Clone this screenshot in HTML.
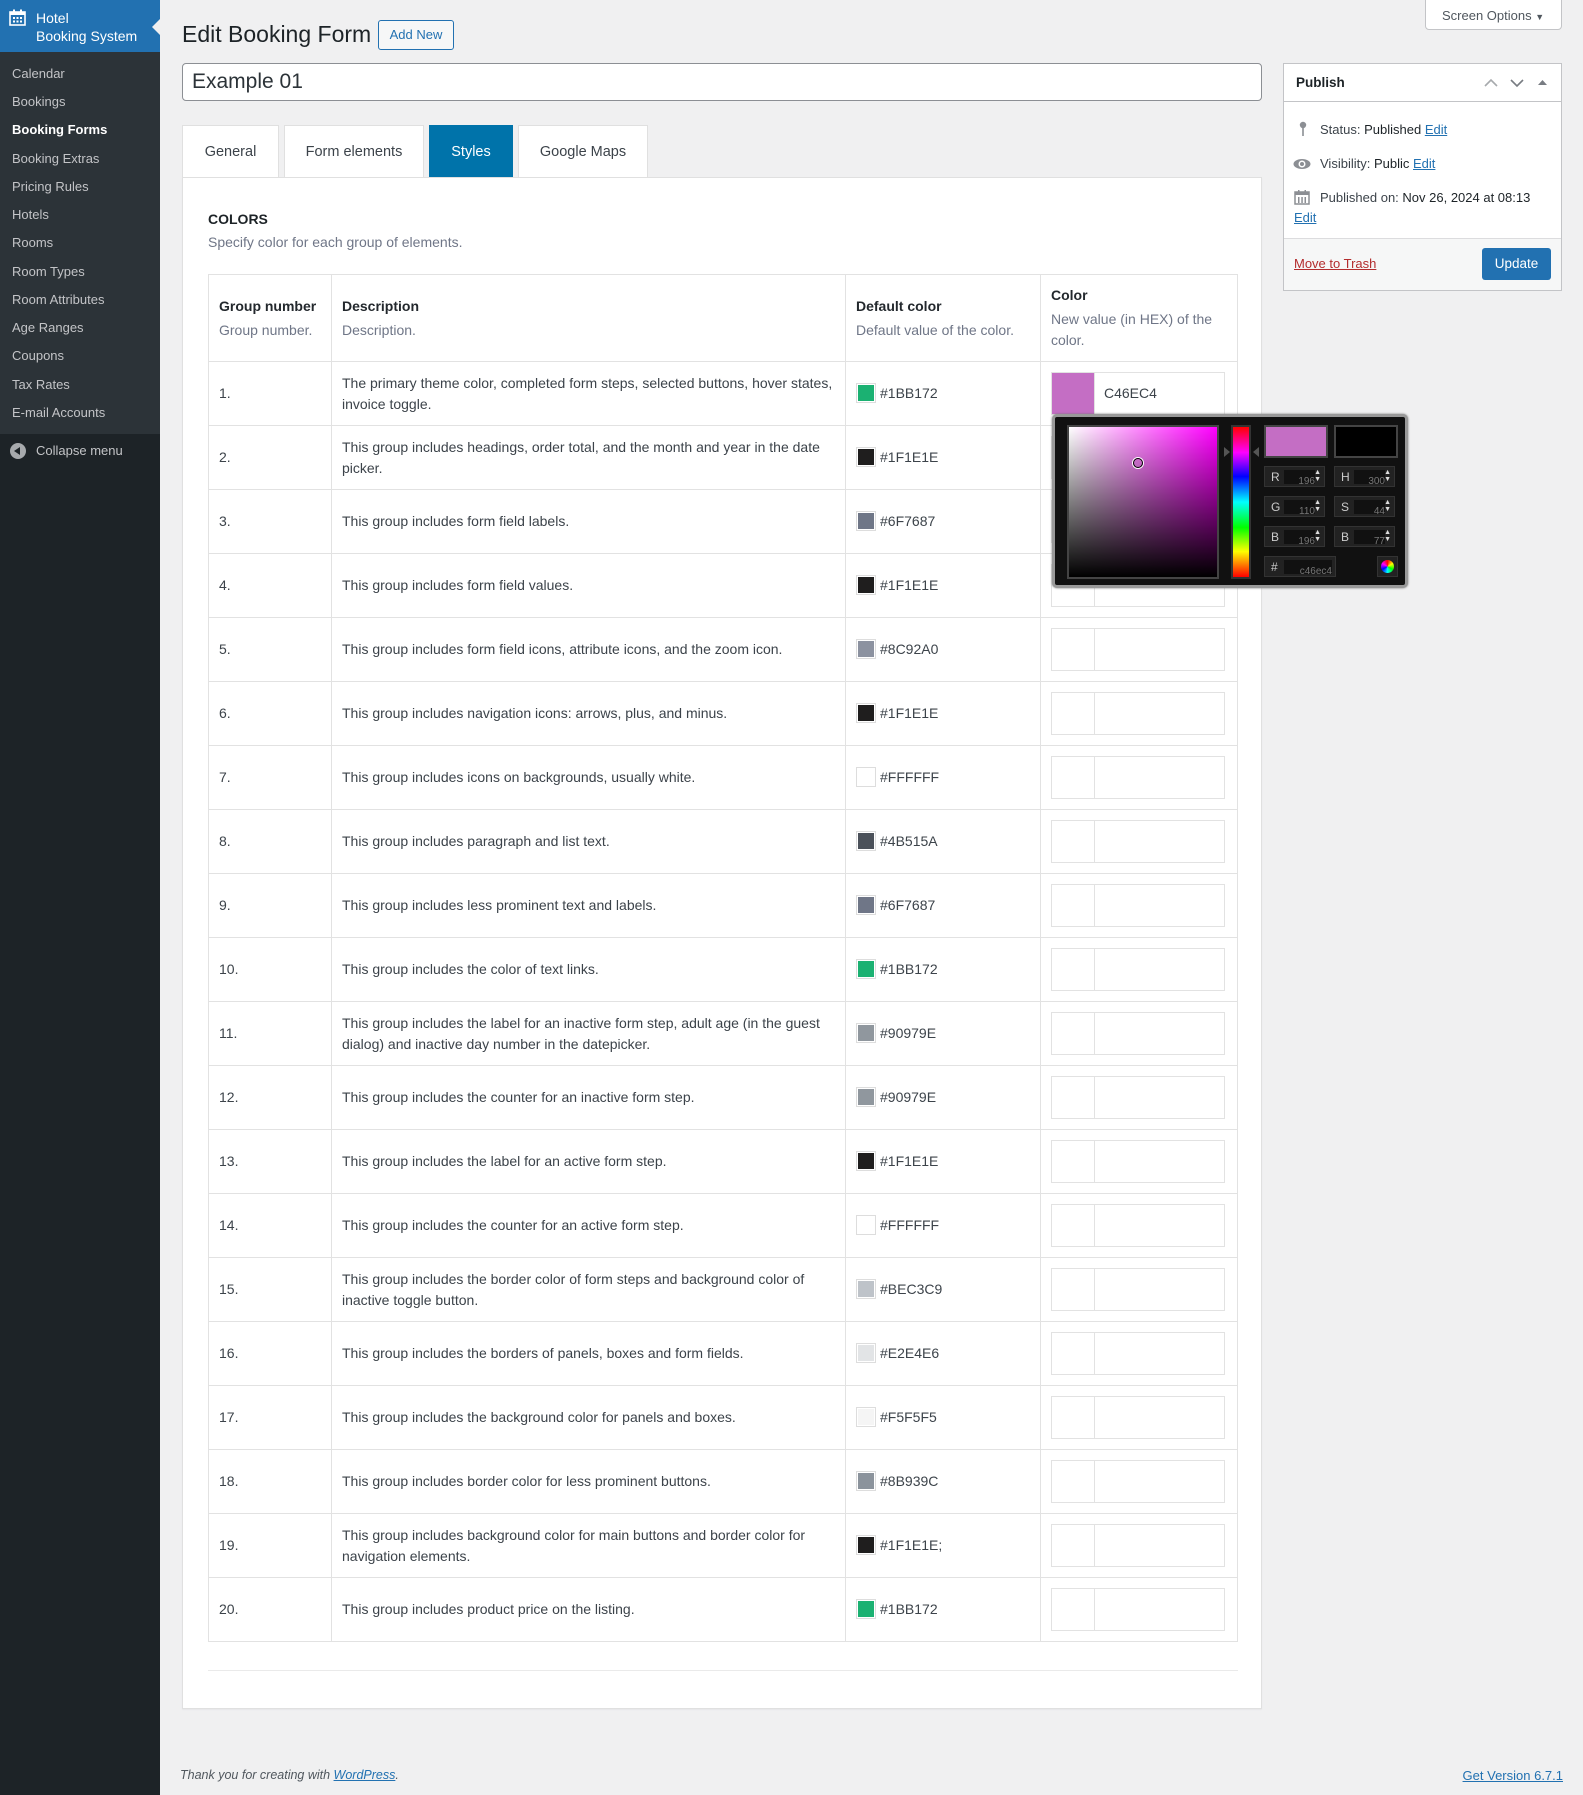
<!DOCTYPE html>
<html><head><meta charset="utf-8"><style>
*{box-sizing:border-box;margin:0;padding:0}
body{width:1583px;height:1795px;background:#f0f0f1;font-family:"Liberation Sans",sans-serif;color:#1d2327;position:relative;overflow:hidden;font-size:13px}
.abs{position:absolute}
#side{left:0;top:0;width:160px;height:1795px;background:#1d2327}
#sh{left:0;top:0;width:160px;height:52px;background:#2271b1;color:#fff;font-size:14px;line-height:18px;padding:9px 0 0 36px}
#sub{left:0;top:52px;width:160px;height:382px;background:#2c3338}
.mi{position:absolute;left:12px;color:#c3c4c7;font-size:13px}
.tri{position:absolute;left:152px;top:19px;width:0;height:0;border-top:8px solid transparent;border-bottom:8px solid transparent;border-right:8px solid #f0f0f1}
h1{position:absolute;left:182px;top:21px;font-size:23px;font-weight:400;color:#1d2327}
.btn{position:absolute;left:378px;top:20px;width:76px;height:30px;border:1px solid #2271b1;border-radius:3px;background:#f6f7f7;color:#2271b1;font-size:13px;text-align:center;line-height:28px}
#title{left:182px;top:63px;width:1080px;height:38px;background:#fff;border:1px solid #8c8f94;border-radius:4px;font-size:21px;padding:6px 9px;color:#2c3338}
.tab{position:absolute;top:125px;height:53px;background:#fff;border:1px solid #e0e0e0;border-bottom:none;font-size:14.5px;color:#3c434a;text-align:center;line-height:52px}
#panel{left:182px;top:177px;width:1080px;height:1532px;background:#fff;border:1px solid #e0e0e0;box-shadow:0 1px 1px rgba(0,0,0,.04)}
table{position:absolute;left:208px;top:274px;width:1030px;border-collapse:collapse;font-size:14px;color:#3c434a}
td,th{font-family:"Liberation Sans",sans-serif;font-size:14px;border:1px solid #e2e2e2;vertical-align:middle;text-align:left;padding:0 10px;line-height:21px}
th{height:87px;font-weight:700;color:#23282d}
th span{display:block;font-weight:400;color:#6f7687;font-size:14px;margin-top:3px}
td{height:64px;color:#3c434a}
.sw{display:inline-block;width:20px;height:20px;border:1px solid #ddd;vertical-align:middle;margin-right:4px;position:relative;top:-1px}
.sw i{position:absolute;left:1px;top:1px;width:16px;height:16px}
.ci{display:block;width:174px;height:43px;border:1px solid #e2e2e2;position:relative}
.ci:before{content:"";position:absolute;left:42px;top:0;bottom:0;border-left:1px solid #e2e2e2}
#pub{left:1283px;top:63px;width:279px;height:228px;background:#fff;border:1px solid #c3c4c7}
.fld{position:absolute;width:61px;height:21px;background:#222;border:1px solid #333;color:#ccc;font-size:12px}
.fld b{position:absolute;left:6px;top:3px;font-weight:400}
.fld i{position:absolute;left:19px;top:3px;width:31px;height:14px;background:#111;font-style:normal;color:#777;font-size:10px;text-align:right;line-height:24px;overflow:visible}
.fld u{position:absolute;right:3px;top:2px;text-decoration:none;color:#ddd;font-size:7px;line-height:7px}
a{color:#2271b1}
</style></head><body>
<div id="side" class="abs"></div>
<div id="sub" class="abs"></div>
<div id="sh" class="abs">Hotel<br>Booking System
<svg style="position:absolute;left:9px;top:9px" width="17" height="17" viewBox="0 0 17 17"><rect x="1" y="3" width="15" height="13" fill="none" stroke="#fff" stroke-width="1.6"/><rect x="1" y="3" width="15" height="3" fill="#fff"/><rect x="4" y="0.5" width="2" height="4" fill="#fff"/><rect x="11" y="0.5" width="2" height="4" fill="#fff"/><g fill="#fff"><rect x="4" y="8" width="2" height="2"/><rect x="7.5" y="8" width="2" height="2"/><rect x="11" y="8" width="2" height="2"/><rect x="4" y="11.5" width="2" height="2"/><rect x="7.5" y="11.5" width="2" height="2"/><rect x="11" y="11.5" width="2" height="2"/></g></svg>
<div class="tri"></div></div>
<div class="mi" style="top:66px">Calendar</div>
<div class="mi" style="top:94px">Bookings</div>
<div class="mi" style="top:122px;color:#fff;font-weight:700">Booking Forms</div>
<div class="mi" style="top:151px">Booking Extras</div>
<div class="mi" style="top:179px">Pricing Rules</div>
<div class="mi" style="top:207px">Hotels</div>
<div class="mi" style="top:235px">Rooms</div>
<div class="mi" style="top:264px">Room Types</div>
<div class="mi" style="top:292px">Room Attributes</div>
<div class="mi" style="top:320px">Age Ranges</div>
<div class="mi" style="top:348px">Coupons</div>
<div class="mi" style="top:377px">Tax Rates</div>
<div class="mi" style="top:405px">E-mail Accounts</div>
<div class="mi" style="top:443px;left:36px">Collapse menu</div>
<div class="abs" style="left:10px;top:443px;width:16px;height:16px;border-radius:50%;background:#a7aaad"><div style="position:absolute;left:4px;top:4px;border-top:4px solid transparent;border-bottom:4px solid transparent;border-right:6px solid #1d2327"></div></div>

<h1>Edit Booking Form</h1>
<div class="btn">Add New</div>
<div class="abs" style="left:1425px;top:-1px;width:137px;height:31px;background:#fff;border:1px solid #c3c4c7;border-radius:0 0 4px 4px;font-size:13px;color:#50575e;padding:8px 0 0 16px">Screen Options <span style="font-size:9px">▼</span></div>
<div id="title" class="abs">Example 01</div>

<div class="tab" style="left:182px;width:97px">General</div>
<div class="tab" style="left:284px;width:140px">Form elements</div>
<div class="tab" style="left:429px;width:84px;background:#0073aa;border-color:#0073aa;color:#fff">Styles</div>
<div class="tab" style="left:518px;width:130px">Google Maps</div>
<div id="panel" class="abs"></div>
<div class="abs" style="left:208px;top:211px;font-weight:700;font-size:14px;color:#1d2327">COLORS</div>
<div class="abs" style="left:208px;top:234px;font-size:14px;color:#6f7687">Specify color for each group of elements.</div>

<table>
<tr><th style="width:123px">Group number<span>Group number.</span></th><th style="width:514px">Description<span>Description.</span></th><th style="width:195px">Default color<span>Default value of the color.</span></th><th style="vertical-align:top;padding-top:10px">Color<span>New value (in HEX) of the color.</span></th></tr>
<tr><td>1.</td><td>The primary theme color, completed form steps, selected buttons, hover states, invoice toggle.</td><td><span class="sw"><i style="background:#1BB172"></i></span>#1BB172</td><td><span class="ci"><span style="position:absolute;left:0;top:0;width:42px;height:41px;background:#C46EC4"></span><span style="position:absolute;left:52px;top:10px;color:#3c434a">C46EC4</span></span></td></tr>
<tr><td>2.</td><td>This group includes headings, order total, and the month and year in the date picker.</td><td><span class="sw"><i style="background:#1F1E1E"></i></span>#1F1E1E</td><td><span class="ci"></span></td></tr>
<tr><td>3.</td><td>This group includes form field labels.</td><td><span class="sw"><i style="background:#6F7687"></i></span>#6F7687</td><td><span class="ci"></span></td></tr>
<tr><td>4.</td><td>This group includes form field values.</td><td><span class="sw"><i style="background:#1F1E1E"></i></span>#1F1E1E</td><td><span class="ci"></span></td></tr>
<tr><td>5.</td><td>This group includes form field icons, attribute icons, and the zoom icon.</td><td><span class="sw"><i style="background:#8C92A0"></i></span>#8C92A0</td><td><span class="ci"></span></td></tr>
<tr><td>6.</td><td>This group includes navigation icons: arrows, plus, and minus.</td><td><span class="sw"><i style="background:#1F1E1E"></i></span>#1F1E1E</td><td><span class="ci"></span></td></tr>
<tr><td>7.</td><td>This group includes icons on backgrounds, usually white.</td><td><span class="sw"><i style="background:#FFFFFF"></i></span>#FFFFFF</td><td><span class="ci"></span></td></tr>
<tr><td>8.</td><td>This group includes paragraph and list text.</td><td><span class="sw"><i style="background:#4B515A"></i></span>#4B515A</td><td><span class="ci"></span></td></tr>
<tr><td>9.</td><td>This group includes less prominent text and labels.</td><td><span class="sw"><i style="background:#6F7687"></i></span>#6F7687</td><td><span class="ci"></span></td></tr>
<tr><td>10.</td><td>This group includes the color of text links.</td><td><span class="sw"><i style="background:#1BB172"></i></span>#1BB172</td><td><span class="ci"></span></td></tr>
<tr><td>11.</td><td>This group includes the label for an inactive form step, adult age (in the guest dialog) and inactive day number in the datepicker.</td><td><span class="sw"><i style="background:#90979E"></i></span>#90979E</td><td><span class="ci"></span></td></tr>
<tr><td>12.</td><td>This group includes the counter for an inactive form step.</td><td><span class="sw"><i style="background:#90979E"></i></span>#90979E</td><td><span class="ci"></span></td></tr>
<tr><td>13.</td><td>This group includes the label for an active form step.</td><td><span class="sw"><i style="background:#1F1E1E"></i></span>#1F1E1E</td><td><span class="ci"></span></td></tr>
<tr><td>14.</td><td>This group includes the counter for an active form step.</td><td><span class="sw"><i style="background:#FFFFFF"></i></span>#FFFFFF</td><td><span class="ci"></span></td></tr>
<tr><td>15.</td><td>This group includes the border color of form steps and background color of inactive toggle button.</td><td><span class="sw"><i style="background:#BEC3C9"></i></span>#BEC3C9</td><td><span class="ci"></span></td></tr>
<tr><td>16.</td><td>This group includes the borders of panels, boxes and form fields.</td><td><span class="sw"><i style="background:#E2E4E6"></i></span>#E2E4E6</td><td><span class="ci"></span></td></tr>
<tr><td>17.</td><td>This group includes the background color for panels and boxes.</td><td><span class="sw"><i style="background:#F5F5F5"></i></span>#F5F5F5</td><td><span class="ci"></span></td></tr>
<tr><td>18.</td><td>This group includes border color for less prominent buttons.</td><td><span class="sw"><i style="background:#8B939C"></i></span>#8B939C</td><td><span class="ci"></span></td></tr>
<tr><td>19.</td><td>This group includes background color for main buttons and border color for navigation elements.</td><td><span class="sw"><i style="background:#1F1E1E"></i></span>#1F1E1E;</td><td><span class="ci"></span></td></tr>
<tr><td>20.</td><td>This group includes product price on the listing.</td><td><span class="sw"><i style="background:#1BB172"></i></span>#1BB172</td><td><span class="ci"></span></td></tr>
</table>
<div class="abs" style="left:208px;top:1670px;width:1030px;border-top:1px solid #eaeaea"></div>

<!-- color picker -->
<div class="abs" style="left:1052px;top:414px;width:356px;height:174px;background:#111;border:3px solid #999;border-radius:5px;box-shadow:0 0 2px #777">
<div class="abs" style="left:12px;top:8px;width:152px;height:154px;border:2px solid #444;background:linear-gradient(to top,#000,rgba(0,0,0,0)),linear-gradient(to right,#fff,#ff00ff)"></div>
<div class="abs" style="left:78px;top:41px;width:10px;height:10px;border:1.5px solid #000;border-radius:50%;box-shadow:0 0 0 1px #fff"></div>
<div class="abs" style="left:176px;top:8px;width:20px;height:154px;border:2px solid #333;background:linear-gradient(to bottom,#f00,#f0f 17%,#00f 33%,#0ff 50%,#0f0 67%,#ff0 83%,#f00)"></div>
<div class="abs" style="left:169px;top:30px;border-top:5px solid transparent;border-bottom:5px solid transparent;border-left:6px solid #555"></div>
<div class="abs" style="left:198px;top:30px;border-top:5px solid transparent;border-bottom:5px solid transparent;border-right:6px solid #555"></div>
<div class="abs" style="left:209px;top:8px;width:64px;height:33px;background:#C46EC4;border:2px solid #444"></div>
<div class="abs" style="left:279px;top:8px;width:64px;height:33px;background:#000;border:2px solid #444"></div>
<div class="fld" style="left:209px;top:49px"><b>R</b><i>196</i><u>▲<br>▼</u></div>
<div class="fld" style="left:279px;top:49px"><b>H</b><i>300</i><u>▲<br>▼</u></div>
<div class="fld" style="left:209px;top:79px"><b>G</b><i>110</i><u>▲<br>▼</u></div>
<div class="fld" style="left:279px;top:79px"><b>S</b><i>44</i><u>▲<br>▼</u></div>
<div class="fld" style="left:209px;top:109px"><b>B</b><i>196</i><u>▲<br>▼</u></div>
<div class="fld" style="left:279px;top:109px"><b>B</b><i>77</i><u>▲<br>▼</u></div>
<div class="fld" style="left:209px;top:139px;width:72px"><b>#</b><i style="width:48px">c46ec4</i></div>
<div class="abs" style="left:322px;top:139px;width:21px;height:21px;background:#222;border:1px solid #333"><div style="position:absolute;left:3px;top:3px;width:13px;height:13px;border-radius:50%;background:conic-gradient(#f00,#ff0,#0f0,#0ff,#00f,#f0f,#f00)"></div></div>
</div>

<!-- publish -->
<div id="pub" class="abs">
<div style="height:38px;border-bottom:1px solid #c3c4c7;padding:11px 12px;font-weight:700;font-size:13.5px;position:relative">Publish
<svg style="position:absolute;right:12px;top:13px" width="65" height="12" viewBox="0 0 65 12"><path d="M1 9 L7 3 L13 9" fill="none" stroke="#a7aaad" stroke-width="1.6"/><path d="M27 3 L33 9 L39 3" fill="none" stroke="#787c82" stroke-width="1.6"/><path d="M54 8 L58.5 3 L63 8 Z" fill="#787c82"/></svg></div>
<div style="position:absolute;left:36px;top:58px;font-size:13px;color:#3c434a">Status: <span style="color:#1d2327">Published</span> <a href="#">Edit</a></div>
<div style="position:absolute;left:36px;top:92px;font-size:13px;color:#3c434a">Visibility: <span style="color:#1d2327">Public</span> <a href="#">Edit</a></div>
<div style="position:absolute;left:36px;top:126px;font-size:13px;color:#3c434a">Published on: <span style="color:#1d2327">Nov 26, 2024 at 08:13</span></div>
<div style="position:absolute;left:10px;top:146px;font-size:13px"><a href="#">Edit</a></div>
<svg style="position:absolute;left:12px;top:57px" width="14" height="16" viewBox="0 0 14 16"><circle cx="7" cy="4" r="3.2" fill="#8c8f94"/><rect x="6.2" y="6" width="1.6" height="9" fill="#8c8f94"/></svg>
<svg style="position:absolute;left:9px;top:94px" width="18" height="12" viewBox="0 0 18 12"><ellipse cx="9" cy="6" rx="8.5" ry="5" fill="#8c8f94"/><circle cx="9" cy="6" r="3.5" fill="#fff"/><circle cx="9" cy="6" r="2" fill="#8c8f94"/></svg>
<svg style="position:absolute;left:10px;top:125px" width="16" height="16" viewBox="0 0 16 16"><rect x="1" y="3" width="14" height="12" fill="none" stroke="#8c8f94" stroke-width="1.5"/><rect x="1" y="3" width="14" height="3" fill="#8c8f94"/><rect x="4" y="1" width="1.5" height="3" fill="#8c8f94"/><rect x="10.5" y="1" width="1.5" height="3" fill="#8c8f94"/><g fill="#8c8f94"><rect x="4" y="8" width="1.5" height="6"/><rect x="7.3" y="8" width="1.5" height="6"/><rect x="10.5" y="8" width="1.5" height="6"/></g></svg>
<div style="position:absolute;left:0;right:0;top:174px;bottom:0;background:#f6f7f7;border-top:1px solid #dcdcde"></div>
<div style="position:absolute;left:10px;top:192px;font-size:13px"><a href="#" style="color:#b32d2e">Move to Trash</a></div>
<div style="position:absolute;left:198px;top:184px;width:69px;height:32px;background:#2271b1;border-radius:3px;color:#fff;text-align:center;line-height:31px;font-size:13.5px">Update</div>
</div>

<div class="abs" style="left:180px;top:1768px;font-style:italic;font-size:12.5px;color:#50575e">Thank you for creating with <a href="#">WordPress</a>.</div>
<div class="abs" style="right:20px;top:1768px;font-size:13px"><a href="#">Get Version 6.7.1</a></div>
</body></html>
